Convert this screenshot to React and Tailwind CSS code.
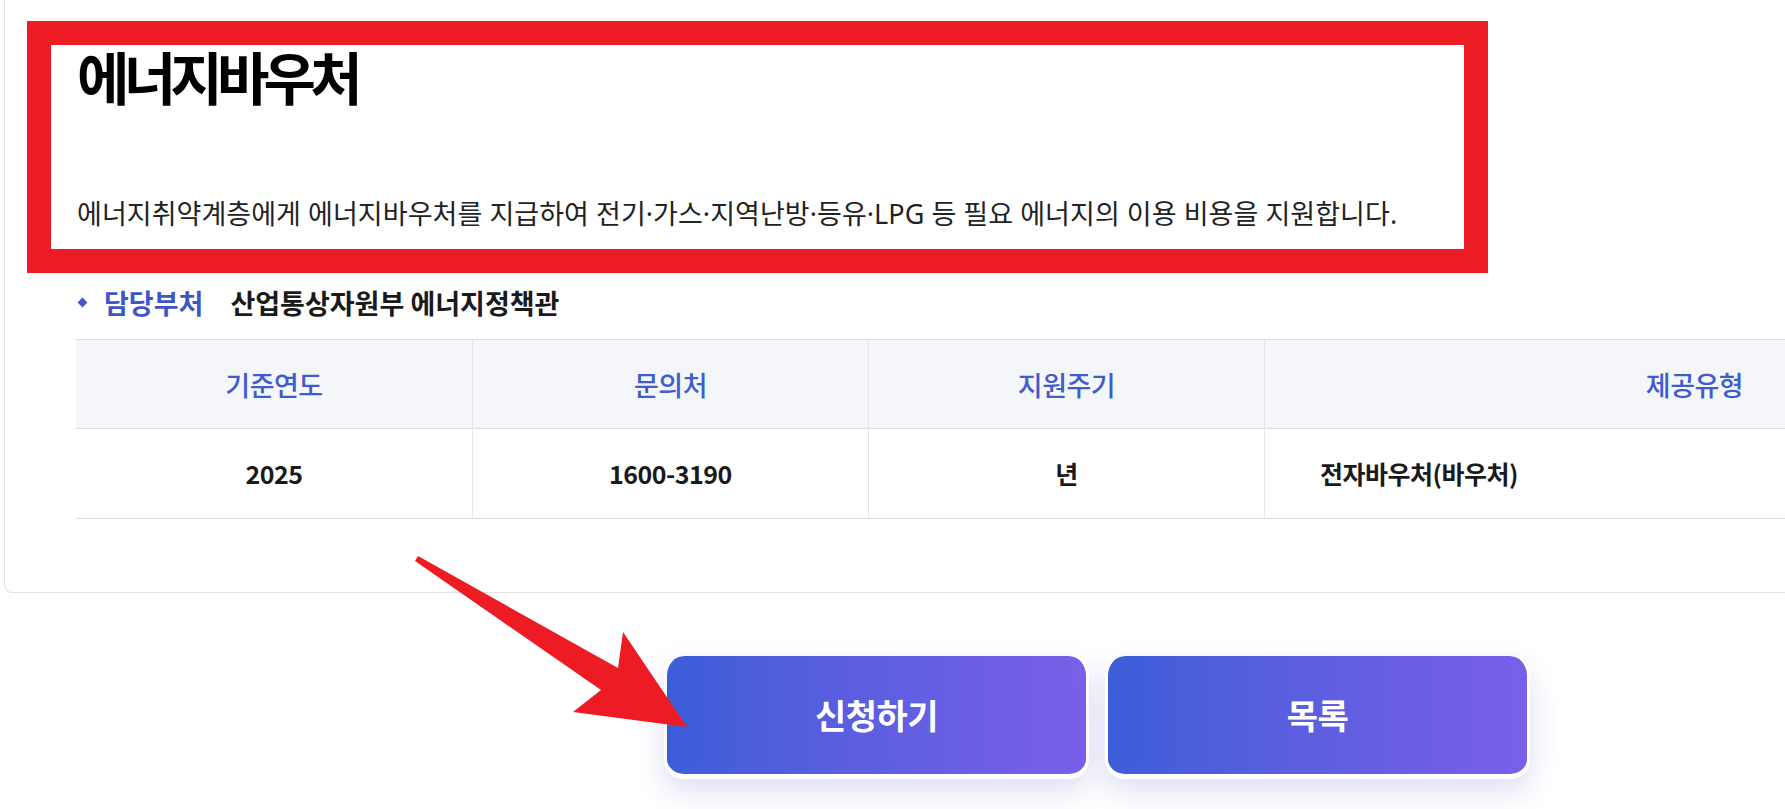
const font = "font-['Noto_Sans_CJK_KR','Noto_Sans',sans-serif]"

const columns = [
  { label: '기준연도', value: '2025', width: 'w-[396px]', align: 'justify-center' },
  { label: '문의처', value: '1600-3190', width: 'w-[396px]', align: 'justify-center' },
  { label: '지원주기', value: '년', width: 'w-[396px]', align: 'justify-center' },
  { label: '제공유형', value: '전자바우처(바우처)', width: 'w-[860px]', align: 'justify-start pl-[55px]' },
]

function ActionButton({ children }) {
  return (
    <button className="w-[425px] h-[123px] rounded-[20px] border-x-[3px] border-b-[5px] border-t-0 border-white bg-linear-to-r from-[#3c5dd8] to-[#7a5fe9] shadow-[0_12px_28px_rgba(90,90,200,0.2)] flex items-center justify-center">
      <span className="text-white text-[34px] font-bold tracking-[-0.5px] leading-none">{children}</span>
    </button>
  )
}

export default function App() {
  return (
    <div className={`relative w-[1785px] h-[809px] overflow-hidden bg-white ${font}`}>
      <div className="w-[2194px]">
        {/* card, its top edge sits above the viewport */}
        <div className="ml-[4px] w-[2185px] pt-[21px] pl-[22px] pb-[73px] border-x border-b border-[#e4e4e4] rounded-b-lg">
          <div className="w-[1461px] h-[252px] border-[24px] border-[#ed1c24] pl-[26px] pt-[2px]">
            <h1 className="text-[57px] font-bold tracking-[-5.8px] leading-none text-black">에너지바우처</h1>
            <p className="mt-[96px] text-[27px] tracking-[0.05px] leading-none text-[#222] font-['Noto_Sans','Noto_Sans_CJK_KR',sans-serif]">
              에너지취약계층에게 에너지바우처를 지급하여 전기·가스·지역난방·등유·LPG 등 필요 에너지의 이용 비용을 지원합니다.
            </p>
          </div>

          <div className="ml-[52px] mt-[16px] flex items-center h-[26px]">
            <span className="w-[7px] h-[7px] rotate-45 bg-[#4a56c6]" />
            <span className="ml-[18px] text-[27px] font-bold leading-none text-[#3f55c6]">담당부처</span>
            <span className="ml-[27px] text-[27px] font-bold leading-none text-[#1a1a1a]">산업통상자원부 에너지정책관</span>
          </div>

          <div className="ml-[49px] mt-[24px] flex border-t border-b border-[#dcdcdc]">
            {columns.map((col, i) => (
              <div key={col.label} className={`${col.width} ${i > 0 ? 'border-l border-[#e3e5e9]' : ''}`}>
                <div className="h-[89px] bg-[#f4f6fa] border-b border-[#dcdcdc] flex items-center justify-center">
                  <span className="text-[27px] font-medium tracking-[-0.5px] text-[#3f5ccc] leading-none">{col.label}</span>
                </div>
                <div className={`h-[89px] flex items-center ${col.align}`}>
                  <span className="text-[25px] font-semibold tracking-[-0.5px] text-[#1a1a1a] leading-none">{col.value}</span>
                </div>
              </div>
            ))}
          </div>
        </div>

        <div className="mt-[63px] flex justify-center gap-[16px]">
          <ActionButton>신청하기</ActionButton>
          <ActionButton>목록</ActionButton>
        </div>
      </div>

      {/* red annotation arrow */}
      <svg className="absolute left-0 top-0 pointer-events-none" width="1785" height="809" viewBox="0 0 1785 809">
        <polygon
          points="418,556 618,668 623,632 687,727 573,712 601,690 415,561"
          fill="#ed1c24"
        />
      </svg>
    </div>
  )
}
